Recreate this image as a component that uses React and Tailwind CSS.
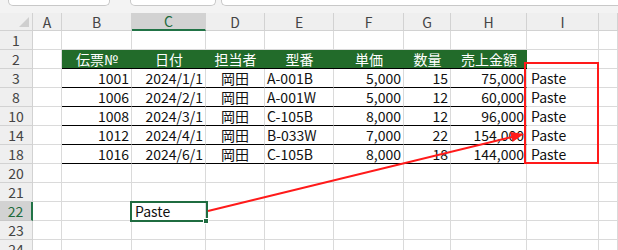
const COLS = [
  { key: 'A', w: 'w-[29px]' },
  { key: 'B', w: 'w-[70px]' },
  { key: 'C', w: 'w-[74px]' },
  { key: 'D', w: 'w-[59px]' },
  { key: 'E', w: 'w-[69px]' },
  { key: 'F', w: 'w-[70px]' },
  { key: 'G', w: 'w-[47px]' },
  { key: 'H', w: 'w-[76px]' },
  { key: 'I', w: 'w-[72px]' },
  { key: '', w: 'w-[19px]' },
]

const HEAD = ['伝票№', '日付', '担当者', '型番', '単価', '数量', '売上金額']

const DATA = [
  { n: 3, cells: ['1001', '2024/1/1', '岡田', 'A-001B', '5,000', '15', '75,000'] },
  { n: 8, cells: ['1006', '2024/2/1', '岡田', 'A-001W', '5,000', '12', '60,000'] },
  { n: 10, cells: ['1008', '2024/3/1', '岡田', 'C-105B', '8,000', '12', '96,000'] },
  { n: 14, cells: ['1012', '2024/4/1', '岡田', 'B-033W', '7,000', '22', '154,000'] },
  { n: 18, cells: ['1016', '2024/6/1', '岡田', 'C-105B', '8,000', '18', '144,000'] },
]

// alignment for B..H in data rows
const ALIGN = ['justify-end pr-[2px]', 'justify-end pr-[2px]', 'justify-center', 'justify-start pl-[2px]', 'justify-end pr-[2px]', 'justify-end pr-[2px]', 'justify-end pr-[2px]']

function RowHead({ n, selected }) {
  return (
    <div
      className={`w-[33px] h-[19px] shrink-0 flex items-center justify-center border-b ${
        selected
          ? 'bg-[#d2d2d2] text-[#1e6b3c] border-r-2 border-r-[#217346] border-b-[#c8c8c8]'
          : 'bg-[#efefef] text-[#444] border-r border-[#d2d2d2]'
      }`}
    >
      {n}
    </div>
  )
}

function Cell({ w, className = '', children }) {
  return (
    <div className={`${w} h-[19px] shrink-0 flex items-center overflow-visible whitespace-nowrap border-r border-b border-[#dadada] ${className}`}>
      {children}
    </div>
  )
}

function EmptyRow({ n, selected, children }) {
  return (
    <div className="flex">
      <RowHead n={n} selected={selected} />
      {COLS.map(c => (
        <Cell key={c.key} w={c.w}>
          {c.key === 'C' && children}
        </Cell>
      ))}
    </div>
  )
}

export default function App() {
  return (
    <div
      className="relative w-[618px] h-[250px] overflow-hidden bg-white text-[14px] leading-[18px] text-[#111]"
      style={{ fontFamily: '"Noto Sans CJK JP", "Noto Sans", sans-serif' }}
    >
      {/* toolbar edge */}
      <div className="h-[13px] bg-[#f3f3f3] flex items-start">
        <div className="ml-[8px] w-[102px] h-[6px] bg-white border border-t-0 border-[#c8c8c8] rounded-b-[5px]" />
        <div className="ml-[20px] w-[86px] h-[6px] bg-white border border-t-0 border-[#c8c8c8] rounded-b-[5px]" />
        <div className="ml-[5px] flex-1 h-[6px] bg-white border border-t-0 border-r-0 border-[#c8c8c8] rounded-bl-[5px]" />
      </div>

      {/* column header */}
      <div className="flex h-[18px] bg-[#efefef] text-[#444]">
        <div className="w-[33px] shrink-0 border-r border-b border-[#d2d2d2] relative">
          <div className="absolute right-[3px] bottom-[3px] w-0 h-0 border-l-[10px] border-l-transparent border-b-[10px] border-b-[#cfcfcf]" />
        </div>
        {COLS.map(c => (
          <div
            key={c.key}
            className={`${c.w} shrink-0 flex items-center justify-center border-r border-[#d2d2d2] ${
              c.key === 'C' ? 'bg-[#d2d2d2] text-[#1e6b3c] border-b-2 border-b-[#217346]' : 'border-b'
            }`}
          >
            {c.key}
          </div>
        ))}
      </div>

      <EmptyRow n={1} />

      {/* table header */}
      <div className="flex">
        <RowHead n={2} />
        <Cell w="w-[29px]" />
        <div className="flex bg-[#226b2a] text-white border-b border-black">
          {HEAD.map((h, i) => (
            <div key={h} className={`${COLS[i + 1].w} h-[18px] shrink-0 flex items-center justify-center`}>
              {h}
            </div>
          ))}
        </div>
        <Cell w="w-[72px]" />
        <Cell w="w-[19px]" />
      </div>

      {DATA.map(r => (
        <div key={r.n} className="flex">
          <RowHead n={r.n} />
          <Cell w="w-[29px]" />
          {r.cells.map((v, i) => (
            <Cell key={i} w={COLS[i + 1].w} className={`${ALIGN[i]} border-b-black`}>
              {v}
            </Cell>
          ))}
          <Cell w="w-[72px]" className="pl-[4px]">Paste</Cell>
          <Cell w="w-[19px]" />
        </div>
      ))}

      <EmptyRow n={20} />
      <EmptyRow n={21} />
      <EmptyRow n={22} selected>
        <span className="pl-[3px]">Paste</span>
      </EmptyRow>
      <EmptyRow n={23} />
      <EmptyRow n={24} />

      {/* active cell C22 */}
      <div className="absolute left-[130px] top-[201px] w-[78px] h-[21px] border-2 border-[#1f6c40]" />
      <div className="absolute left-[203px] top-[218px] w-[6px] h-[6px] bg-[#1f6c40] border border-white" />

      {/* annotation */}
      <svg className="absolute left-0 top-0" width="618" height="250">
        <rect x="525" y="63" width="73" height="100" fill="none" stroke="#ff1a1a" strokeWidth="2" />
        <line x1="208" y1="211" x2="512" y2="137" stroke="#ff1a1a" strokeWidth="2" />
        <polygon points="524,134 512.5,141.9 510.2,132" fill="#ff1a1a" />
      </svg>
    </div>
  )
}
